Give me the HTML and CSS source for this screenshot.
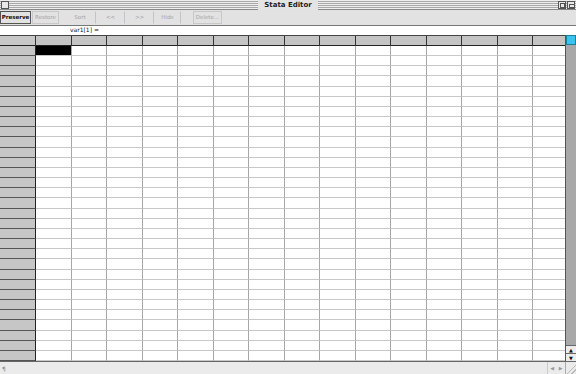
FILE: index.html
```html
<!DOCTYPE html>
<html>
<head>
	<meta charset="UTF-8">
	<title>Stata Editor</title>
	<link rel="stylesheet" href="styles.css">
</head>
<body>
	<div id="janela">
		<div id="titulo">
			<span class="caixa caixa-fechar"></span>
			<span id="titulo-texto">Stata Editor</span>
			<span class="caixa caixa-zoom"></span>
			<span class="caixa caixa-recolher"></span>
		</div>

		<div id="ferramentas">
			<a class="botao ativo" style="width:31px">Preserve</a>
			<a class="botao" style="width:27px">Restore</a>
			<a class="botao sem-borda" style="width:32px">Sort</a>
			<a class="botao sem-borda" style="width:29px">&lt;&lt;</a>
			<a class="botao sem-borda" style="width:29px">&gt;&gt;</a>
			<a class="botao sem-borda" style="width:27px">Hide</a>
			<a class="botao" style="width:29px">Delete...</a>
		</div>

		<div id="formula">var1[1] =</div>

		<div id="planilha">
			<div id="grade"></div>
			<div id="rolagem">
				<div id="rolagem-topo"></div>
				<div id="rolagem-trilho"></div>
				<div class="seta">&#9650;</div>
				<div class="seta">&#9660;</div>
			</div>
		</div>

		<div id="rodape">
			<span id="rodape-icone">&#182;</span>
			<span id="rodape-setas"><span>&#9664;</span><span>&#9654;</span></span>
			<span id="rodape-canto"></span>
		</div>
	</div>

	<script>
		var colunas = 15;
		var linhas = 31;
		var grade = document.getElementById("grade");

		// cabecalho
		for (var c = 0; c <= colunas; c++) {
			var cel = document.createElement("div");
			cel.className = "cab";
			grade.appendChild(cel);
		}

		// linhas de dados
		for (var l = 0; l < linhas; l++) {
			var num = document.createElement("div");
			num.className = "num";
			grade.appendChild(num);
			for (var c = 0; c < colunas; c++) {
				var cel = document.createElement("div");
				cel.className = "cel";
				if (l == 0 && c == 0) {
					cel.className += " selecionado";
				}
				grade.appendChild(cel);
			}
		}
	</script>
</body>
</html>
```

FILE: styles.css
```css
* {
	box-sizing: border-box;
	font-family: "DejaVu Sans", Verdana, sans-serif;
}

body {
	margin: 0;
	background-color: #fff;
}

#janela {
	width: 576px;
	height: 374px;
	display: flex;
	flex-direction: column;
	overflow: hidden;
}

#titulo {
	height: 10px;
	display: flex;
	align-items: center;
	justify-content: center;
	position: relative;
	background: repeating-linear-gradient(#eeeeee 0, #eeeeee 1px, #a8a8a8 1px, #a8a8a8 2px);
	background-color: #ddd;
	border-bottom: 1px solid #888;
}

#titulo-texto {
	background-color: #e4e4e4;
	padding: 0 6px;
	font-size: 7px;
	font-weight: bold;
	line-height: 10px;
	color: #222;
}

.caixa {
	position: absolute;
	top: 1px;
	width: 8px;
	height: 8px;
	border: 1px solid #555;
	background-color: #e8e8e8;
}

.caixa-fechar {
	left: 1px;
}

.caixa-zoom {
	right: 10px;
}

.caixa-recolher {
	right: 1px;
}

.caixa-zoom::after, .caixa-recolher::after {
	content: "";
	position: absolute;
	left: 1px;
	top: 1px;
	width: 3px;
	height: 3px;
	border: 1px solid #555;
}

.caixa-recolher::after {
	width: 4px;
	height: 2px;
	top: 2px;
}

#ferramentas {
	height: 16px;
	display: flex;
	align-items: center;
	background-color: #e2e2e2;
	border-bottom: 1px solid #777;
}

.botao {
	height: 13px;
	font-size: 5.5px;
	line-height: 11px;
	text-align: center;
	color: #a4a4a4;
	border: 1px solid #c8c8c8;
	white-space: nowrap;
	margin-right: 1px;
}

.botao.ativo {
	color: #111;
	font-weight: bold;
	border: 1px solid #555;
}

.botao.sem-borda {
	border-color: transparent;
	border-right: 1px solid #c4c4c4;
	margin-right: 0;
}

#ferramentas .botao:nth-child(3) {
	margin-left: 4px;
}

#ferramentas .botao:nth-child(7) {
	margin-left: 12px;
}

#formula {
	height: 9px;
	font-size: 6px;
	line-height: 8px;
	padding-left: 70px;
	color: #111;
	background-color: #fff;
}

#planilha {
	flex-grow: 1;
	display: flex;
	min-height: 0;
}

#grade {
	flex-grow: 1;
	display: grid;
	grid-template-columns: 36px repeat(15, 35.54px);
	grid-template-rows: 10px repeat(31, 1fr);
	overflow: hidden;
	border-top: 1px solid #444;
}

.cab {
	background-color: #c4c4c4;
	border-right: 1px solid #333;
	border-bottom: 1px solid #222;
}

.cab:first-child {
	background-color: #c8c8c8;
}

.num {
	background-color: #c6c6c6;
	border-right: 1px solid #222;
	border-bottom: 1px solid #555;
}

.cel {
	background-color: #fff;
	border-right: 1px solid #a6a6a6;
	border-bottom: 1px solid #c8c8c8;
}

.cel.selecionado {
	background-color: #000;
}

#rolagem {
	width: 11px;
	display: flex;
	flex-direction: column;
	background-color: #a4a4a4;
	border-left: 1px solid #555;
}

#rolagem-topo {
	height: 10px;
	background-color: #38c4ec;
	border: 1px solid #1a7fa0;
}

#rolagem-trilho {
	flex-grow: 1;
	background-color: #a8a8a8;
}

.seta {
	height: 8px;
	font-size: 5px;
	line-height: 8px;
	text-align: center;
	color: #111;
	background-color: #ececec;
	border-top: 1px solid #666;
}

#rodape {
	height: 13px;
	display: flex;
	align-items: center;
	background-color: #ebebeb;
	border-top: 1px solid #666;
}

#rodape-icone {
	font-size: 6px;
	color: #888;
	padding-left: 2px;
	flex-grow: 1;
}

#rodape-setas {
	display: flex;
	height: 12px;
	width: 18px;
	border-left: 1px solid #ccc;
	font-size: 5px;
	color: #999;
	align-items: center;
	justify-content: space-around;
}

#rodape-canto {
	width: 11px;
	height: 12px;
	border-left: 1px solid #aaa;
	background: linear-gradient(135deg, transparent 55%, #bbb 55%, #bbb 62%, transparent 62%, transparent 75%, #bbb 75%, #bbb 82%, transparent 82%);
}
```
